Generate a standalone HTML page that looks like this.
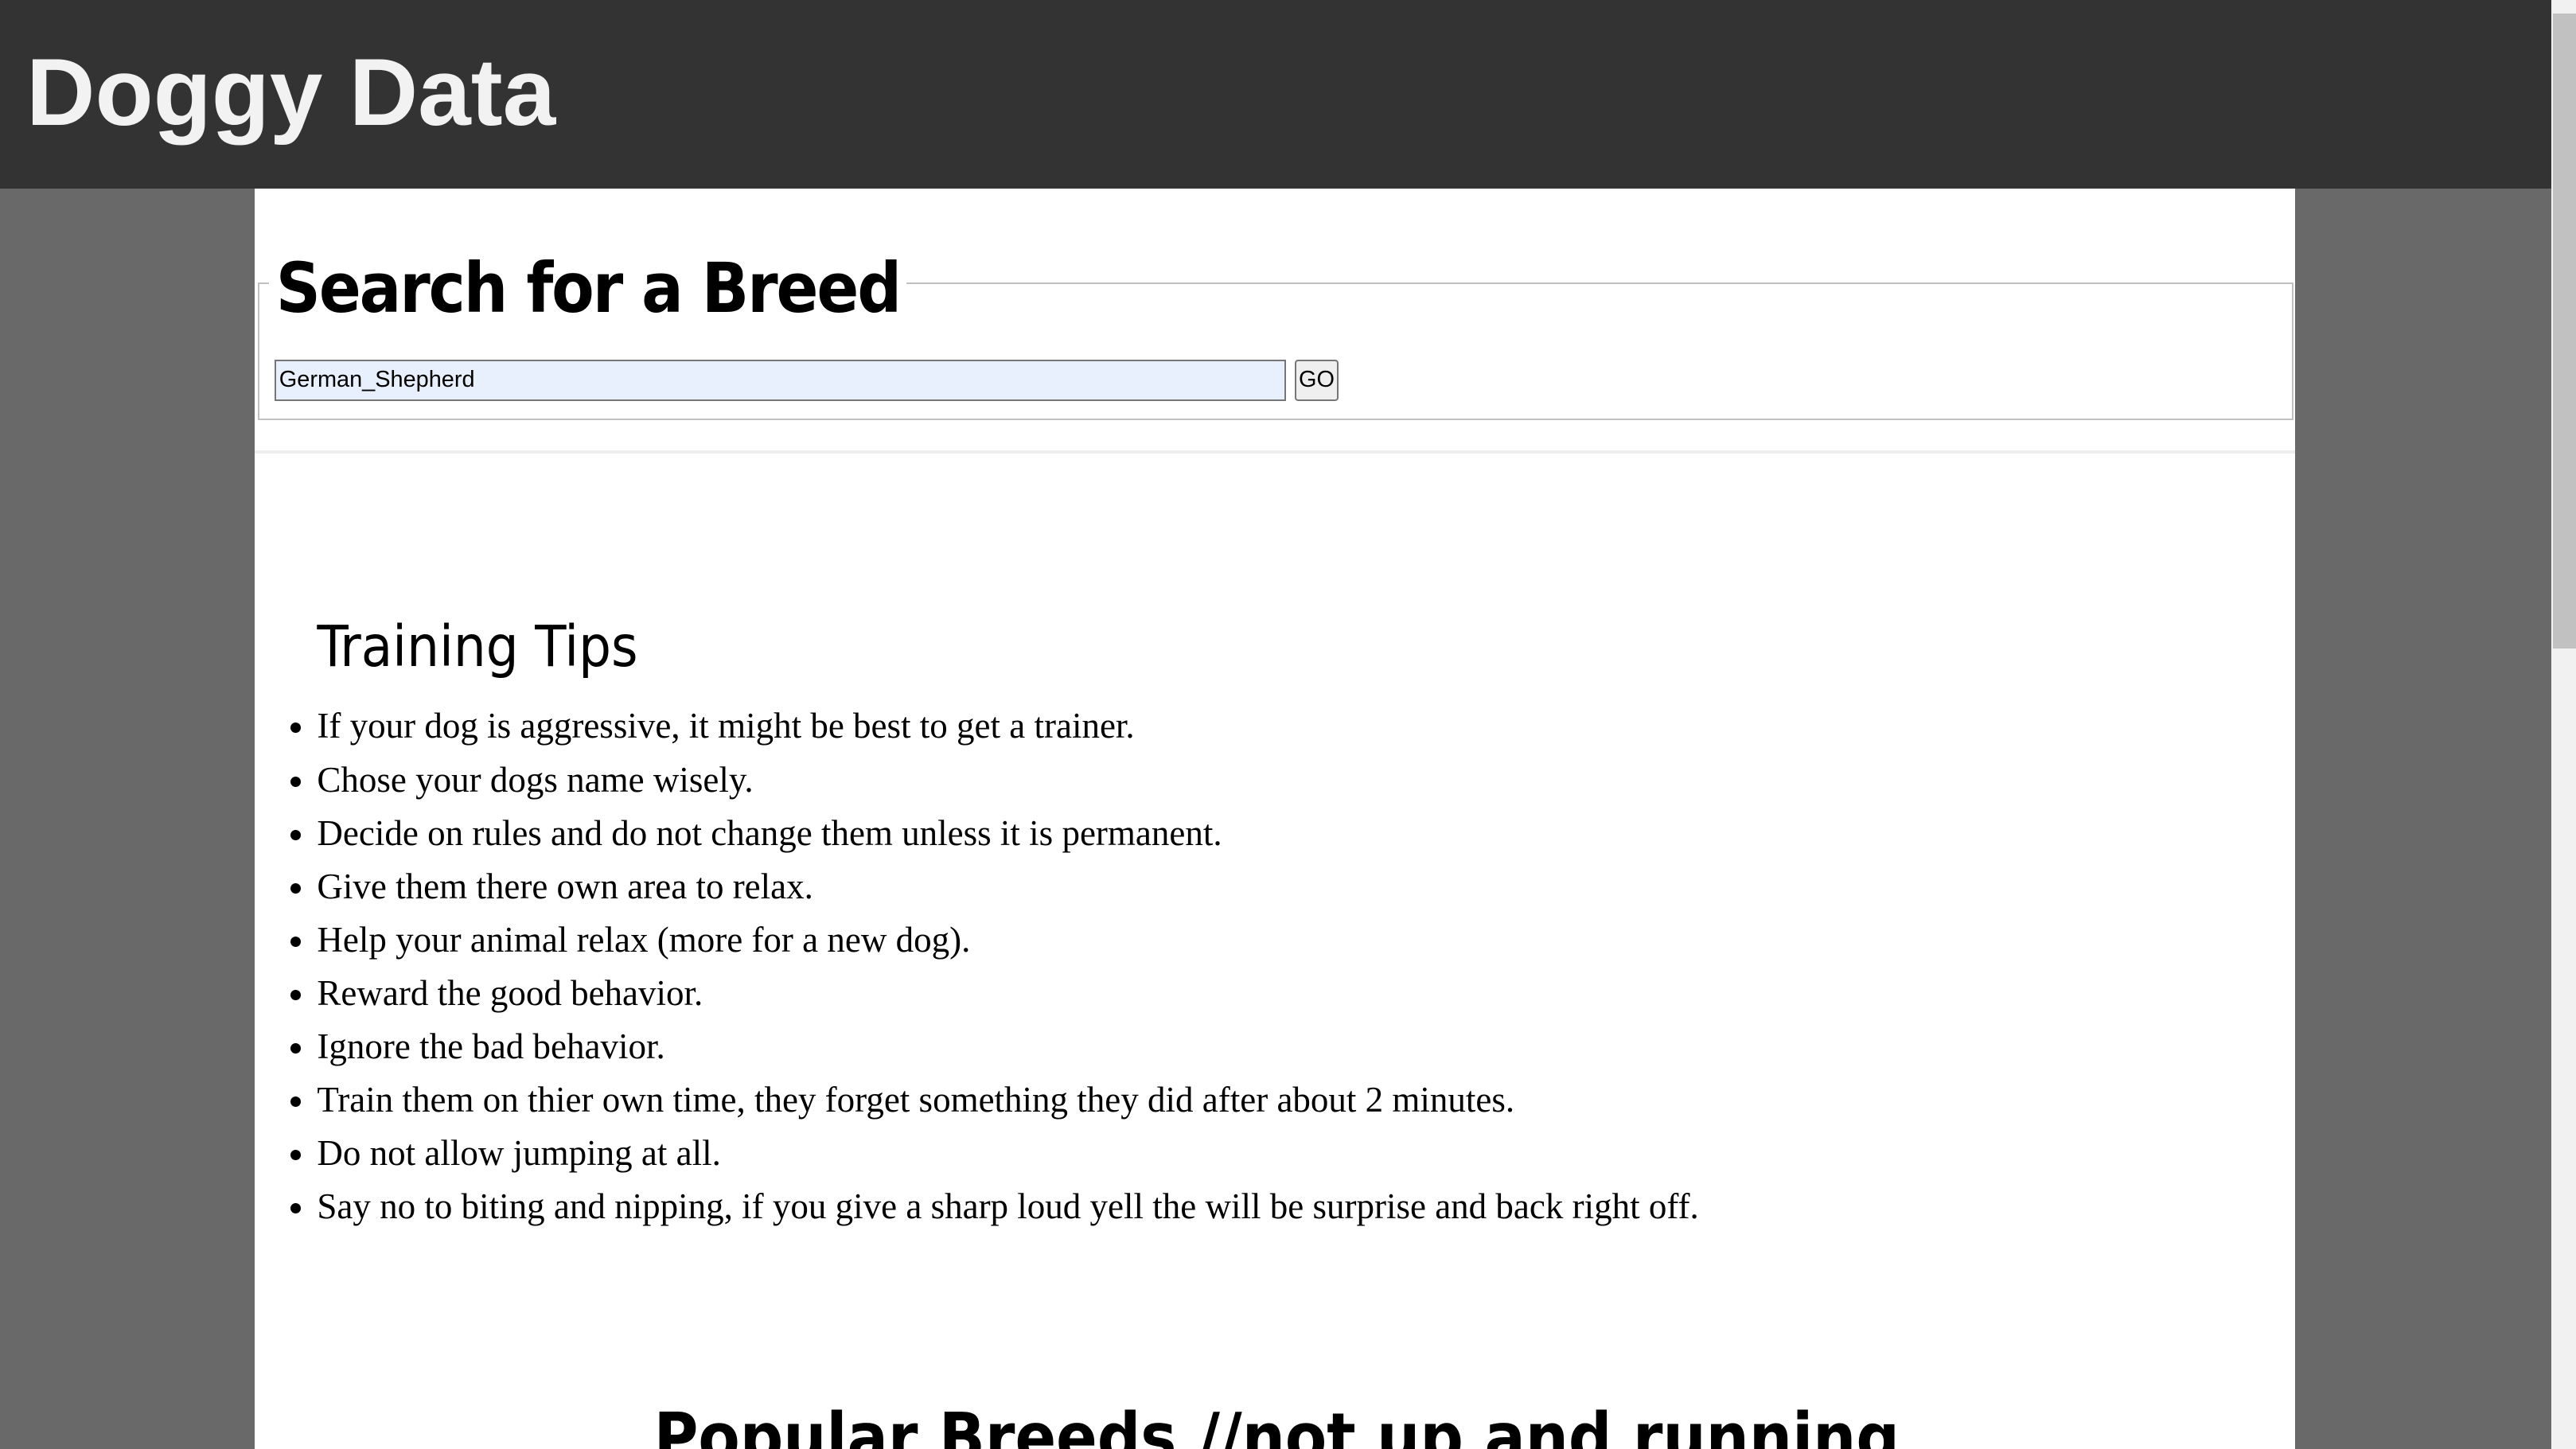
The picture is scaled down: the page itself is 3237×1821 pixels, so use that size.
<!DOCTYPE html>
<html><head><meta charset="utf-8"><style>
html,body{margin:0;padding:0;width:3237px;height:1821px;overflow:hidden;background:#696969}
#w{zoom:2.0644;width:1568px;height:882px;position:relative;overflow:hidden;background:#696969}
#hd{position:absolute;left:0;top:0;width:1553px;height:115px;background:#333}
#hd h1{position:absolute;left:16px;top:23px;margin:0;font:bold 58px/68px "Liberation Sans",Arial,sans-serif;color:#f2f2f2}
#main{position:absolute;left:155px;top:115px;width:1242px;height:767px;background:#fff}
fieldset{position:absolute;left:2px;top:57px;width:1239px;height:84px;box-sizing:border-box;border:1px solid #c0c0c0;margin:0;padding:0}
.lg{position:absolute;left:6px;top:-22px;background:#fff;padding:0 4px;font:bold 42px/50px "DejaVu Sans Condensed","Liberation Sans",sans-serif;color:#000;letter-spacing:-1px}
.inp{position:absolute;left:9px;top:46px;width:616px;height:25px;box-sizing:border-box;background:#e8f0fe;border:1px solid #767676;font:14px/23px "Liberation Sans",Arial,sans-serif;padding-left:2px}
.btn{position:absolute;left:630px;top:46px;width:27px;height:25px;box-sizing:border-box;background:#efefef;border:1px solid #767676;border-radius:2px;font:14px/23px "Liberation Sans",Arial,sans-serif;text-align:center}
hr{position:absolute;left:0;top:159px;width:1242px;margin:0;border:0;border-top:2px solid #eee}
h2{position:absolute;left:38px;top:256px;margin:0;font:normal 34.7px/46px "DejaVu Sans Condensed","Liberation Sans",sans-serif;color:#000}
ul{position:absolute;left:0;top:311px;margin:0;padding-left:38px;font:21.8px/32.5px "Liberation Serif","Times New Roman",serif;color:#000}
h3{position:absolute;left:243px;top:735px;margin:0;font:bold 41px/50px "DejaVu Sans Condensed","Liberation Sans",sans-serif;color:#000;white-space:nowrap}
#sb{position:absolute;left:1553px;top:0;width:15px;height:882px;background:#f1f1f1}
#th{position:absolute;left:1px;top:8px;width:14px;height:387px;background:#c1c1c1}
</style></head><body><div id="w">
<div id="hd"><h1>Doggy Data</h1></div>
<div id="main">
<fieldset><div class="lg">Search for a Breed</div>
<div class="inp">German_Shepherd</div><div class="btn">GO</div></fieldset>
<hr>
<h2>Training Tips</h2>
<ul>
<li>If your dog is aggressive, it might be best to get a trainer.</li>
<li>Chose your dogs name wisely.</li>
<li>Decide on rules and do not change them unless it is permanent.</li>
<li>Give them there own area to relax.</li>
<li>Help your animal relax (more for a new dog).</li>
<li>Reward the good behavior.</li>
<li>Ignore the bad behavior.</li>
<li>Train them on thier own time, they forget something they did after about 2 minutes.</li>
<li>Do not allow jumping at all.</li>
<li>Say no to biting and nipping, if you give a sharp loud yell the will be surprise and back right off.</li>
</ul>
<h3>Popular Breeds //not up and running</h3>
</div>
<div id="sb"><div id="th"></div></div>
</div></body></html>
